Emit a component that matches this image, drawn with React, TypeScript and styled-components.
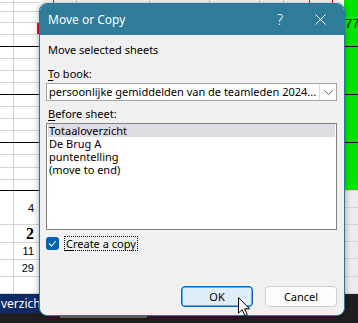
import styled, { createGlobalStyle } from 'styled-components'

const GlobalStyle = createGlobalStyle`
  html, body {
    margin: 0;
    padding: 0;
  }
  body {
    width: 358px;
    height: 323px;
    overflow: hidden;
    background: #ffffff;
    font-family: "Segoe UI", "Noto Sans", "DejaVu Sans", sans-serif;
  }
`

const Page = styled.div`
  position: relative;
  width: 358px;
  height: 323px;
  display: flex;
  flex-direction: column;
  overflow: hidden;
`

/* ---------- spreadsheet behind the dialog ---------- */

const SheetArea = styled.div`
  display: flex;
  height: 294px;
  background: #ffffff;
`

const Column = styled.div<{ $w?: number }>`
  display: flex;
  flex-direction: column;
  width: ${(p) => (p.$w ? `${p.$w}px` : 'auto')};
  flex: ${(p) => (p.$w ? 'none' : 1)};
`

const SheetRow = styled.div<{ $h: number; $line?: 'black' | 'gray' | 'none'; $bg?: string }>`
  display: flex;
  box-sizing: border-box;
  height: ${(p) => p.$h}px;
  background: ${(p) => p.$bg || '#ffffff'};
  border-bottom: 1px solid
    ${(p) => (p.$line === 'black' ? '#000000' : p.$line === 'none' ? 'transparent' : '#d4d4d4')};
`

const NarrowCell = styled.div`
  width: 14px;
  box-sizing: border-box;
  border-right: 1px solid #d4d4d4;
`

const ValueCell = styled.div<{ $bold?: boolean; $marked?: boolean }>`
  flex: 1;
  display: flex;
  align-items: center;
  justify-content: flex-end;
  padding-right: 5px;
  box-sizing: border-box;
  color: #000;
  font-family: ${(p) => (p.$bold ? '"Liberation Serif", serif' : '"Liberation Sans", Arial, sans-serif')};
  font-weight: ${(p) => (p.$bold ? 700 : 400)};
  font-size: ${(p) => (p.$bold ? '16px' : '11px')};
  border-right: ${(p) => (p.$marked ? '2px solid #e81123' : 'none')};
`

const GreenText = styled.div`
  font-family: "Liberation Sans", Arial, sans-serif;
  font-size: 13px;
  color: #000;
  padding: 16px 0 0 1px;
`

const TopMarks = styled.div`
  display: flex;
  height: 3px;
`

const TopMark = styled.div<{ $w: number; $c: string }>`
  width: ${(p) => p.$w}px;
  border-right: 1px solid ${(p) => p.$c};
`

const TabBar = styled.div`
  flex: 1;
  display: flex;
  flex-direction: column;
  background: #1f1f1f;
`

const TabStrip = styled.div`
  display: flex;
  height: 19px;
`

const ActiveTab = styled.div`
  width: 60px;
  background: #0e2a66;
  color: #ffffff;
  font-family: "Segoe UI", "Noto Sans", sans-serif;
  font-size: 12px;
  line-height: 19px;
  padding-left: 1px;
  overflow: hidden;
  white-space: nowrap;
`

const TabUnderline = styled.div`
  margin: 2px 0 0 60px;
  width: 87px;
  height: 3px;
  background: #4f7a5c;
`

/* ---------- dialog ---------- */

const Dialog = styled.div`
  position: absolute;
  left: 39px;
  top: 3px;
  width: 306px;
  height: 313px;
  box-sizing: border-box;
  border: 1px solid #2b7898;
  border-radius: 8px;
  background: #f0f0f0;
  box-shadow: 0 0 6px rgba(0, 0, 0, 0.35);
  display: flex;
  flex-direction: column;
  overflow: hidden;
`

const TitleBar = styled.div`
  height: 31px;
  flex: none;
  display: flex;
  align-items: center;
  background: #2e7b9a;
  color: #ffffff;
  padding: 0 0 0 8px;
`

const Title = styled.div`
  flex: 1;
  font-size: 12px;
`

const HelpGlyph = styled.div`
  width: 14px;
  font-size: 14px;
  font-weight: 300;
  text-align: center;
  margin-right: 28px;
`

const CloseButton = styled.div`
  display: flex;
  margin-right: 18px;
`

const Body = styled.div`
  flex: 1;
  display: flex;
  flex-direction: column;
  padding: 0 7px 0 6px;
  font-size: 11px;
  color: #000;
`

const Label = styled.div<{ $top: number }>`
  margin-top: ${(p) => p.$top}px;
  height: 16px;
  line-height: 16px;
  padding-left: 2px;
  white-space: nowrap;
`

const Key = styled.span`
  text-decoration: underline;
  text-underline-offset: 2px;
`

const Combo = styled.div`
  margin-top: 1px;
  height: 18px;
  box-sizing: border-box;
  border: 1px solid #a5a5a5;
  background: #ffffff;
  display: flex;
  align-items: stretch;
`

const ComboText = styled.div`
  flex: 1;
  line-height: 16px;
  padding-left: 2px;
  white-space: nowrap;
  overflow: hidden;
`

const ComboButton = styled.div`
  width: 17px;
  box-sizing: border-box;
  border-left: 1px solid #d9d9d9;
  display: flex;
  align-items: center;
  justify-content: center;
`

const ListBox = styled.div`
  margin-top: 1px;
  height: 107px;
  box-sizing: border-box;
  border: 1px solid #828282;
  background: #ffffff;
  display: flex;
  flex-direction: column;
  padding: 0 1px;
`

const ListItem = styled.div<{ $selected?: boolean }>`
  height: 13px;
  line-height: 13px;
  padding-left: 1px;
  background: ${(p) => (p.$selected ? '#dedde3' : 'transparent')};
  white-space: nowrap;
`

const CheckRow = styled.div`
  margin-top: 6px;
  display: flex;
  align-items: center;
  gap: 5px;
`

const CheckBox = styled.div`
  width: 13px;
  height: 13px;
  border-radius: 3px;
  background: #0063b1;
  display: flex;
  align-items: center;
  justify-content: center;
`

const CheckLabel = styled.div`
  border: 1px dotted #000;
  padding: 0 1px 0 1px;
  line-height: 13px;
`

const ButtonRow = styled.div`
  margin-top: auto;
  margin-bottom: 8px;
  display: flex;
  justify-content: flex-end;
  gap: 12px;
`

const DialogButton = styled.div<{ $primary?: boolean }>`
  width: 72px;
  height: 21px;
  box-sizing: border-box;
  border-radius: 4px;
  border: 1px solid ${(p) => (p.$primary ? '#0067c0' : '#d0d0d0')};
  box-shadow: ${(p) => (p.$primary ? 'inset 0 0 0 0.5px #0067c0' : 'none')};
  background: ${(p) => (p.$primary ? '#e0eef9' : '#fdfdfd')};
  display: flex;
  align-items: center;
  justify-content: center;
  font-size: 11px;
`

const Cursor = styled.svg`
  position: absolute;
  left: 238px;
  top: 297px;
`

const leftRows: { h: number; line?: 'black' | 'gray'; value?: string; bold?: boolean; marked?: boolean }[] = [
  { h: 3 },
  { h: 9 },
  { h: 11 },
  { h: 12, marked: true },
  { h: 12, line: 'black' },
  { h: 12 },
  { h: 12 },
  { h: 12 },
  { h: 12, line: 'black' },
  { h: 12 },
  { h: 12 },
  { h: 12 },
  { h: 12, line: 'black' },
  { h: 12 },
  { h: 13 },
  { h: 12 },
  { h: 11, line: 'black' },
  { h: 34, value: '4' },
  { h: 18, value: '2', bold: true },
  { h: 17, value: '11' },
  { h: 17, value: '29' },
  { h: 17 },
]

const rightRows: { h: number; line: 'black' | 'gray'; bg: string }[] = [
  { h: 47, line: 'black', bg: '#00e600' },
  { h: 48, line: 'black', bg: '#00e600' },
  { h: 48, line: 'black', bg: '#00e600' },
  { h: 48, line: 'gray', bg: '#00e600' },
  { h: 17, line: 'gray', bg: '#ececec' },
  { h: 17, line: 'gray', bg: '#ececec' },
  { h: 17, line: 'gray', bg: '#ececec' },
  { h: 17, line: 'gray', bg: '#ececec' },
  { h: 18, line: 'gray', bg: '#ececec' },
  { h: 17, line: 'gray', bg: '#ececec' },
]

const sheets = ['Totaaloverzicht', 'De Brug A', 'puntentelling', '(move to end)']

export default function App() {
  return (
    <Page>
      <GlobalStyle />
      <SheetArea>
        <Column $w={39}>
          {leftRows.map((r, i) => (
            <SheetRow key={i} $h={r.h} $line={r.line}>
              <NarrowCell />
              <ValueCell $bold={r.bold} $marked={r.marked}>
                {r.value}
              </ValueCell>
            </SheetRow>
          ))}
        </Column>
        <Column>
          <TopMarks>
            <TopMark $w={14} $c="#555" />
            <TopMark $w={22} $c="#d4d4d4" />
            <TopMark $w={72} $c="#d4d4d4" />
            <TopMark $w={59} $c="#d4d4d4" />
            <TopMark $w={49} $c="#d4d4d4" />
            <TopMark $w={23} $c="#d4d4d4" />
            <TopMark $w={25} $c="#e81123" />
            <TopMark $w={22} $c="#e81123" />
          </TopMarks>
        </Column>
        <Column $w={14}>
          {rightRows.map((r, i) => (
            <SheetRow key={i} $h={r.h} $line={r.line} $bg={r.bg}>
              {i === 0 && <GreenText>77</GreenText>}
            </SheetRow>
          ))}
        </Column>
      </SheetArea>
      <TabBar>
        <TabStrip>
          <ActiveTab>verzicht</ActiveTab>
        </TabStrip>
        <TabUnderline />
      </TabBar>

      <Dialog>
        <TitleBar>
          <Title>Move or Copy</Title>
          <HelpGlyph>?</HelpGlyph>
          <CloseButton>
            <svg width="11" height="11" viewBox="0 0 11 11">
              <path d="M0.5 0.5 L10.5 10.5 M10.5 0.5 L0.5 10.5" stroke="#ffffff" strokeWidth="1" fill="none" />
            </svg>
          </CloseButton>
        </TitleBar>
        <Body>
          <Label $top={7}>Move selected sheets</Label>
          <Label $top={8}>
            <Key>T</Key>o book:
          </Label>
          <Combo>
            <ComboText>persoonlijke gemiddelden van de teamleden 2024...</ComboText>
            <ComboButton>
              <svg width="9" height="5" viewBox="0 0 9 5">
                <path d="M0.5 0.5 L4.5 4.5 L8.5 0.5" stroke="#606060" strokeWidth="1" fill="none" />
              </svg>
            </ComboButton>
          </Combo>
          <Label $top={5}>
            <Key>B</Key>efore sheet:
          </Label>
          <ListBox>
            {sheets.map((s, i) => (
              <ListItem key={s} $selected={i === 0}>
                {s}
              </ListItem>
            ))}
          </ListBox>
          <CheckRow>
            <CheckBox>
              <svg width="9" height="7" viewBox="0 0 9 7">
                <path d="M1 3.5 L3.5 6 L8 1" stroke="#ffffff" strokeWidth="1.1" fill="none" />
              </svg>
            </CheckBox>
            <CheckLabel>
              <Key>C</Key>reate a copy
            </CheckLabel>
          </CheckRow>
          <ButtonRow>
            <DialogButton $primary>OK</DialogButton>
            <DialogButton>Cancel</DialogButton>
          </ButtonRow>
        </Body>
      </Dialog>

      <Cursor width="13" height="20" viewBox="0 0 13 20">
        <path
          d="M0.5 0.5 L0.5 16 L4.2 12.6 L6.8 18.6 L9.2 17.6 L6.6 11.8 L11.5 11.8 Z"
          fill="#ffffff"
          stroke="#000000"
          strokeWidth="1"
          strokeLinejoin="round"
        />
      </Cursor>
    </Page>
  )
}
